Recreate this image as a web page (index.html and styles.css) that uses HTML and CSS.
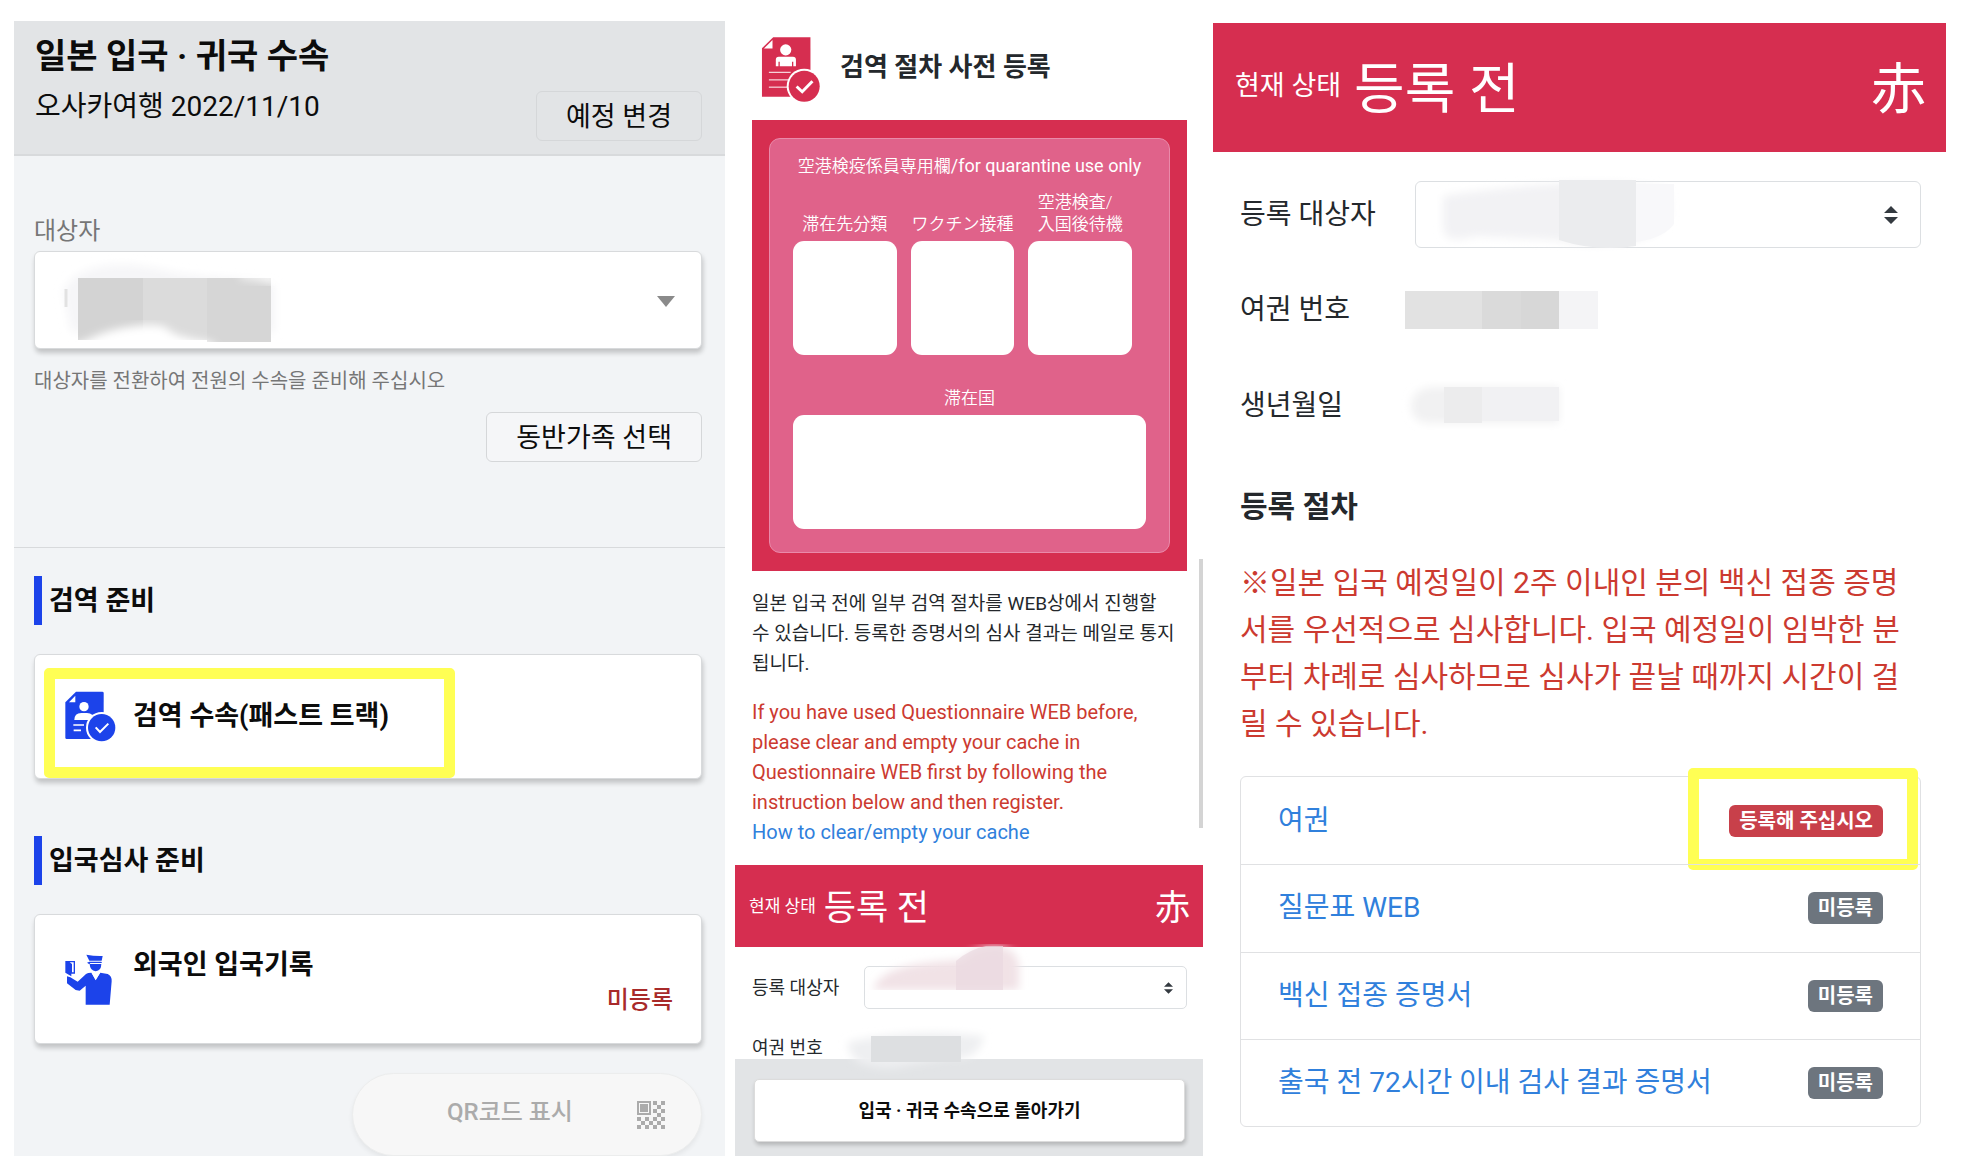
FILE: index.html
```html
<!DOCTYPE html>
<html lang="ko">
<head>
<meta charset="utf-8">
<meta name="viewport" content="width=device-width, initial-scale=1">
<title>일본 입국 · 귀국 수속</title>
<link rel="stylesheet" href="styles.css">
</head>
<body>
<main class="page">

  <section class="trip">
    <header class="trip-header">
      <h1 class="trip-title">일본 입국 · 귀국 수속</h1>
      <div class="trip-row">
        <p class="trip-name">오사카여행 2022/11/10</p>
        <button class="outline-button" type="button">예정 변경</button>
      </div>
    </header>

    <div class="person">
      <label class="person-label" for="person">대상자</label>
      <div class="person-field">
        <select class="person-select" id="person"><option></option></select>
        <svg class="person-mask" viewBox="0 0 280 96" aria-hidden="true">
          <defs>
            <filter id="soft" x="-20%" y="-20%" width="140%" height="140%"><feGaussianBlur stdDeviation="4"/></filter>
          </defs>
          <path d="M28 40C40 10 90 8 130 18S230 24 240 34V80H36Z" fill="#f6f6f8" filter="url(#soft)"/>
          <path d="M31 37v18" stroke="#e2e2e2" stroke-width="3"/>
          <path d="M43 26h65v62H43z" fill="#d3d3d3"/>
          <path d="M108 26h64v62h-64z" fill="#dbdbdb"/>
          <path d="M172 26h64v64h-64z" fill="#d6d6d6"/>
          <path d="M30 96L52 88Q72 77 100 74T134 78T176 90L184 98H30Z" fill="#fff" filter="url(#soft)"/>
          <path d="M205 22h36v10q-12-4-36-6z" fill="#fff" filter="url(#soft)"/>
        </svg>
        <svg class="person-caret" viewBox="0 0 18 11" aria-hidden="true"><path d="M0 0h18L9 11z" fill="#8a8a8a"/></svg>
      </div>
      <p class="person-help">대상자를 전환하여 전원의 수속을 준비해 주십시오</p>
      <button class="outline-button person-family" type="button">동반가족 선택</button>
    </div>

    <div class="steps">
      <h2 class="step-title">검역 준비</h2>
      <a class="step-card step-card-single" href="#quarantine">
        <svg class="step-icon" viewBox="45 37 153 151" aria-hidden="true">
          <path d="M78 38h79q4 0 4 4v138H50q-4 0-4-4V70z" fill="#1c43ea"/>
          <path d="M76 50v20H57z" fill="#fff"/>
          <circle cx="102" cy="83" r="14" fill="#fff"/>
          <path d="M73 123q0-21 21-21h17q20 0 21 21z" fill="#fff"/>
          <path d="M70 138h32M71 154h22" stroke="#fff" stroke-width="5"/>
          <circle cx="155" cy="146" r="47" fill="#fff"/>
          <circle cx="155" cy="146" r="41" fill="#1c43ea"/>
          <path d="M137 145l13 14 25-25" fill="none" stroke="#fff" stroke-width="6"/>
        </svg>
        <span class="step-name">검역 수속(패스트 트랙)</span>
        <span class="highlight highlight-step"></span>
      </a>

      <h2 class="step-title">입국심사 준비</h2>
      <a class="step-card" href="#immigration">
        <svg class="step-icon step-icon-officer" viewBox="41 40 141 153" aria-hidden="true">
          <g fill="#1c43ea">
            <path d="M105 42q25 5 49 4l-3 14h-37z"/>
            <path d="M107 66l7-3h36l2 4h-35l-3 4z"/>
            <path d="M115 70h35q0 20-17 22-17-2-18-22z"/>
            <path d="M42 61h29v38H60v8l-18-11z"/>
            <path d="M47 107l10 3 22 13 25-23q5-4 16-4l13 22 14-22 22 4q13 6 12 22l-6 70h-72v-57l-18 15-12-2-26-20z"/>
          </g>
          <path d="M55 65h12v30h-5V70z" fill="#fff"/>
          <path d="M121 96q12 6 25 0l-13 23z" fill="#fff"/>
        </svg>
        <span class="step-name">외국인 입국기록</span>
        <span class="step-status">미등록</span>
      </a>

      <button class="qr-button" type="button" disabled>
        <span>QR코드 표시</span>
        <svg class="qr-icon" viewBox="0 0 28 28" aria-hidden="true" fill="#ababab">
          <path d="M0 0h14v14H0zM2 2v10h10V2z" fill-rule="evenodd"/>
          <path d="M3 3h8v8H3z"/>
          <path d="M16 0h4v4h-4zM24 0h4v4h-4zM20 4h4v4h-4zM16 8h4v4h-4zM24 8h4v4h-4zM20 12h4v4h-4zM0 16h4v4H0zM8 16h4v4H8zM16 16h4v4h-4zM24 16h4v4h-4zM4 20h4v4H4zM12 20h4v4h-4zM20 20h4v4h-4zM0 24h4v4H0zM8 24h4v4H8zM16 24h4v4h-4zM24 24h4v4h-4z"/>
        </svg>
      </button>
    </div>
  </section>

  <section class="guide">
    <header class="guide-header">
      <svg class="guide-icon" viewBox="34 36 177 197" aria-hidden="true">
        <path d="M70 37h113v180H36V70z" fill="#d62e50"/>
        <path d="M68 45v26H42z" fill="#fff"/>
        <circle cx="108" cy="75" r="17" fill="#fff"/>
        <path d="M78 125v-20q0-9 9-9h43q9 0 9 9v20h-8v-14h-4v14H90v-14h-4v14z" fill="#fff"/>
        <path d="M57 143h66M57 166h58M57 188h58" stroke="#fff" stroke-width="3"/>
        <circle cx="164" cy="185" r="53" fill="#fff"/>
        <circle cx="164" cy="185" r="47" fill="#d62e50"/>
        <path d="M141 186l17 16 31-32" fill="none" stroke="#fff" stroke-width="9"/>
      </svg>
      <h2 class="guide-title">검역 절차 사전 등록</h2>
    </header>

    <div class="guide-body">
      <div class="official" lang="ja">
        <div class="official-inner">
          <p class="official-title">空港検疫係員専用欄<span class="official-latin">/for quarantine use only</span></p>
          <div class="official-grid">
            <p class="official-label">滞在先分類</p>
            <p class="official-label">ワクチン接種</p>
            <p class="official-label"><span>空港検査/<br>入国後待機</span></p>
            <div class="official-box"></div>
            <div class="official-box"></div>
            <div class="official-box"></div>
          </div>
          <p class="official-country">滞在国</p>
          <div class="official-box"></div>
        </div>
      </div>
      <p class="guide-text">일본 입국 전에 일부 검역 절차를 WEB상에서 진행할<br>수 있습니다. 등록한 증명서의 심사 결과는 메일로 통지<br>됩니다.</p>
      <p class="guide-text guide-warning">If you have used Questionnaire WEB before, please clear and empty your cache in Questionnaire WEB first by following the instruction below and then register.</p>
      <a class="guide-text guide-link" href="#cache">How to clear/empty your cache</a>
    </div>

    <div class="status-bar">
      <span class="status-caption">현재 상태</span>
      <strong class="status-value">등록 전</strong>
      <span class="status-color" lang="ja">赤</span>
    </div>

    <div class="mini-form">
      <label class="mini-label" for="mini-person">등록 대상자</label>
      <div class="field">
        <select class="field-select" id="mini-person"><option></option></select>
        <svg class="mini-mask" viewBox="0 0 180 60" aria-hidden="true">
          <path d="M14 46C20 26 50 18 104 16Q112 4 134 2Q156 2 160 20V46Z" fill="#f1e2e6" filter="url(#soft)"/>
          <path d="M97 17q14-12 30-15h17v44H97z" fill="#ead9df" opacity=".7"/>
          <path d="M10 46h160v10H10z" fill="#fff"/>
        </svg>
        <svg class="field-arrows" viewBox="0 0 14 18" aria-hidden="true"><path d="M7 0l7 7H0zM0 11h14l-7 7z" fill="#343a40"/></svg>
      </div>
      <span class="mini-label">여권 번호</span>
      <div class="mini-number">
        <svg class="mini-number-mask" viewBox="0 0 170 50" aria-hidden="true">
          <path d="M14 16Q80 2 150 10Q144 36 116 32L60 42Q14 44 14 16Z" fill="#eeeff1" filter="url(#soft)"/>
          <path d="M37 10h90v26H37z" fill="#dddfe1"/>
        </svg>
      </div>
    </div>

    <footer class="guide-footer">
      <button class="back-button" type="button">입국 · 귀국 수속으로 돌아가기</button>
    </footer>
    <span class="scroll-thumb"></span>
  </section>

  <section class="register">
    <div class="status-bar status-bar-large">
      <span class="status-caption">현재 상태</span>
      <strong class="status-value">등록 전</strong>
      <span class="status-color" lang="ja">赤</span>
    </div>

    <div class="register-body">
      <div class="register-row">
        <label class="register-label" for="registrant">등록 대상자</label>
        <div class="field field-large">
          <select class="field-select" id="registrant"><option></option></select>
          <svg class="register-mask" viewBox="0 0 300 76" aria-hidden="true">
            <path d="M28 20Q80 12 140 8T250 12Q264 40 240 58Q190 76 140 64L60 60Q28 70 28 50Z" fill="#f2f2f4" filter="url(#soft)"/>
            <path d="M144 4h77v66q-40 6-77-6z" fill="#ebecee"/>
            <path d="M221 8h38v40q-10 14-38 18z" fill="#f8f8fa"/>
          </svg>
          <svg class="field-arrows" viewBox="0 0 14 18" aria-hidden="true"><path d="M7 0l7 7H0zM0 11h14l-7 7z" fill="#343a40"/></svg>
        </div>
      </div>
      <div class="register-row register-row-value">
        <span class="register-label">여권 번호</span>
        <span class="value-mask"></span>
      </div>
      <div class="register-row register-row-value register-row-birth">
        <span class="register-label">생년월일</span>
        <svg class="birth-mask" viewBox="0 0 200 38" aria-hidden="true">
          <path d="M6 18Q8 1 28 0H154V36H26Q6 36 6 18Z" fill="#f1f1f2" filter="url(#soft)"/>
          <path d="M39 0h38v36H39z" fill="#ececed"/>
          <path d="M77 0h77v34H77z" fill="#f1f1f3"/>
        </svg>
      </div>

      <h2 class="register-title">등록 절차</h2>
      <p class="register-note">※일본 입국 예정일이 2주 이내인 분의 백신 접종 증명서를 우선적으로 심사합니다. 입국 예정일이 임박한 분부터 차례로 심사하므로 심사가 끝날 때까지 시간이 걸릴 수 있습니다.</p>

      <ul class="docs">
        <li class="docs-item">
          <a class="docs-link" href="#passport">여권</a>
          <span class="badge badge-required">등록해 주십시오</span>
          <span class="highlight highlight-badge"></span>
        </li>
        <li class="docs-item"><a class="docs-link" href="#questionnaire">질문표 WEB</a><span class="badge">미등록</span></li>
        <li class="docs-item"><a class="docs-link" href="#vaccine">백신 접종 증명서</a><span class="badge">미등록</span></li>
        <li class="docs-item"><a class="docs-link" href="#test">출국 전 72시간 이내 검사 결과 증명서</a><span class="badge">미등록</span></li>
      </ul>
    </div>
  </section>

</main>
</body>
</html>
```
FILE: styles.css
```css
* { box-sizing: border-box; }

body {
  margin: 0;
  background: #fff;
  color: #24282c;
  font-family: Roboto, "Noto Sans CJK KR", sans-serif;
}

h1, h2, p, ul { margin: 0; padding: 0; }
a { text-decoration: none; }
button, select { font-family: inherit; color: inherit; }
svg { display: block; }
[lang="ja"] { font-family: Roboto, "Noto Sans CJK JP", sans-serif; }

.page {
  display: grid;
  grid-template-columns: 711fr 468fr 733fr;
  gap: 10px;
  min-height: 100vh;
  padding: 21px 18px 0 14px;
}

.highlight {
  position: absolute;
  border: 11px solid #ffff54;
  border-radius: 5px;
  pointer-events: none;
}

/* Trip overview */
.trip { background: #f2f4f6; color: #0c0c0c; }
.trip-header {
  padding: 11px 23px 13px 21px;
  background: #e2e4e6;
  border-bottom: 2px solid #d8dadc;
}
.trip-title { font-size: 34px; line-height: 48px; font-weight: 700; }
.trip-row {
  display: flex;
  justify-content: space-between;
  align-items: flex-start;
  margin-top: 11px;
}
.trip-name { font-size: 28px; line-height: 32px; }
.outline-button {
  display: block;
  height: 50px;
  padding: 0 29px;
  background: transparent;
  border: 1px solid #d5d7d9;
  border-radius: 6px;
  font-size: 27px;
  line-height: 50px;
}

.person {
  padding: 59px 23px 85px 20px;
  border-bottom: 1px solid #d8dadc;
}
.person-label { display: block; font-size: 24px; line-height: 32px; color: #767676; }
.person-field { position: relative; margin-top: 4px; }
.person-select {
  display: block;
  appearance: none;
  width: 100%;
  height: 98px;
  background: #fff;
  border: 1px solid #d8dadc;
  border-radius: 6px;
  box-shadow: 1px 4px 5px rgba(0, 0, 0, .2);
}
.person-mask { position: absolute; left: 1px; top: 1px; width: 280px; height: 96px; }
.person-caret { position: absolute; right: 27px; top: 45px; width: 18px; height: 11px; }
.person-help { margin-top: 17px; font-size: 20px; line-height: 30px; color: #767676; }
.person-family { margin: 16px 0 0 auto; background: #f5f6f8; }

.steps { padding: 28px 23px 0 20px; }
.step-title {
  padding: 1px 0 0 7px;
  border-left: 8px solid #1c43ea;
  font-size: 27px;
  line-height: 48px;
  font-weight: 700;
}
.step-card {
  position: relative;
  display: grid;
  grid-template-columns: 68px 1fr;
  align-content: start;
  margin: 29px 0 57px;
  padding: 25px 28px 33px 30px;
  background: #fff;
  border: 1px solid #d8dadc;
  border-radius: 6px;
  box-shadow: 1px 4px 5px rgba(0, 0, 0, .2);
  color: inherit;
}
.step-card-single { padding: 36px 29px 36px 30px; }
.step-icon { width: 51px; height: 51px; }
.step-icon-officer { width: 47px; margin-top: 14px; grid-row: span 2; }
.step-name { font-size: 27px; line-height: 50px; font-weight: 700; }
.step-status {
  font-size: 24px;
  line-height: 20px;
  font-weight: 500;
  color: #a82a2a;
  text-align: right;
}
.highlight-step { left: 9px; top: 13px; width: 411px; height: 110px; }

.qr-button {
  display: flex;
  align-items: center;
  justify-content: space-between;
  width: 350px;
  height: 83px;
  margin: -28px 0 0 auto;
  padding: 0 36px 10px 94px;
  background: #f7f7f7;
  border: 1px solid #eceded;
  border-radius: 42px;
  box-shadow: 0 3px 5px rgba(0, 0, 0, .06);
  font-size: 24px;
  font-weight: 500;
  color: #ababab;
}
.qr-icon { width: 28px; height: 28px; margin-top: 10px; }

/* Quarantine guide */
.guide { position: relative; display: flex; flex-direction: column; }
.guide-header { display: flex; gap: 20px; padding: 16px 26px 18px; }
.guide-icon { width: 59px; height: 65px; }
.guide-title { font-size: 26px; line-height: 60px; font-weight: 700; }
.guide-body { padding: 0 16px 0 17px; }

.official { padding: 18px 17px; background: #d62e50; }
.official-inner {
  padding: 15px 23px 23px;
  background: #e0628a;
  border: 1px solid #ea8aaa;
  border-radius: 11px;
  color: #fff;
  font-size: 17px;
  line-height: 22px;
  font-weight: 350;
}
.official-title { text-align: center; line-height: 24px; white-space: nowrap; }
.official-latin { font-size: 18px; font-weight: 400; }
.official-grid {
  display: grid;
  grid-template-columns: repeat(3, 1fr);
  gap: 6px 14px;
  margin: 13px 14px 32px 0;
}
.official-label {
  display: flex;
  align-items: flex-end;
  justify-content: center;
  white-space: nowrap;
}
.official-box { height: 114px; background: #fff; border-radius: 11px; }
.official-country { margin-bottom: 6px; text-align: center; }

.guide-text { margin-top: 18px; font-size: 19px; line-height: 30px; }
.guide-warning { font-size: 20px; color: #cc3a30; }
.guide-link { display: block; margin-top: 0; font-size: 20px; color: #3080dc; }

.status-bar {
  display: flex;
  align-items: center;
  gap: 8px;
  height: 82px;
  margin-top: 18px;
  padding: 0 13px 4px 14px;
  background: #d62e50;
  color: #fff;
  font-size: 35px;
}
.status-caption { font-size: 17px; }
.status-value { font-weight: 400; }
.status-color { margin-left: auto; }

.mini-form {
  display: grid;
  grid-template-columns: 112px 1fr;
  align-items: center;
  row-gap: 28px;
  padding: 19px 16px 0 17px;
}
.mini-label { font-size: 18px; line-height: 22px; }
.mini-number { position: relative; height: 22px; }
.mini-mask { position: absolute; left: -5px; top: -22px; width: 180px; height: 60px; }
.mini-number-mask { position: absolute; left: -30px; top: -11px; width: 170px; height: 50px; z-index: 1; }

.field { position: relative; }
.field-select {
  display: block;
  appearance: none;
  width: 100%;
  height: 43px;
  background: #fff;
  border: 1px solid #dcdfe2;
  border-radius: 5px;
}
.field-arrows { position: absolute; right: 14px; top: 16px; width: 9px; height: 12px; }

.guide-footer { flex: 1; padding: 20px 18px 13px 19px; background: #e2e4e6; }
.back-button {
  display: block;
  width: 100%;
  height: 63px;
  padding-bottom: 4px;
  background: #fff;
  border: 1px solid #dcdcdc;
  border-radius: 5px;
  box-shadow: 1px 3px 4px rgba(0, 0, 0, .2);
  font-size: 18px;
  font-weight: 700;
  color: #0c0c0c;
}
.scroll-thumb { position: absolute; right: 0; top: 538px; width: 4px; height: 269px; background: #d4d4d4; }

/* Registration */
.register { padding-top: 2px; }
.status-bar-large {
  gap: 13px;
  height: 129px;
  margin-top: 0;
  padding: 0 20px 8px 22px;
  font-size: 55px;
}
.status-bar-large .status-caption { font-size: 27px; }

.register-body { padding: 29px 25px 0 27px; }
.register-row { display: flex; align-items: center; }
.register-row-value { height: 38px; margin-top: 43px; }
.register-row-birth { margin-top: 58px; }
.register-label { flex: 0 0 175px; font-size: 28px; line-height: 38px; }
.field-large { flex: 1; }
.field-large .field-select { height: 67px; border-radius: 6px; }
.field-large .field-arrows { right: 23px; top: 25px; width: 14px; height: 18px; }
.register-mask { position: absolute; left: 0; top: -5px; width: 300px; height: 76px; }
.value-mask {
  width: 193px;
  height: 38px;
  margin-left: -10px;
  background: linear-gradient(90deg, #e2e2e2 0 40%, #dadada 40% 60%, #d7d7d7 60% 80%, #f4f4f6 80%);
}
.birth-mask { width: 200px; height: 38px; margin-left: -10px; overflow: visible; }

.register-title { margin-top: 62px; font-size: 30px; line-height: 40px; font-weight: 700; }
.register-note {
  margin-top: 32px;
  padding-right: 10px;
  font-size: 30px;
  line-height: 47px;
  color: #cc3a30;
}

.docs {
  display: grid;
  grid-auto-rows: 1fr;
  min-height: 351px;
  margin-top: 29px;
  border: 1px solid #e0e1e3;
  border-radius: 6px;
  list-style: none;
}
.docs-item {
  position: relative;
  display: flex;
  align-items: center;
  justify-content: space-between;
  padding: 20px 37px;
}
.docs-item + .docs-item { border-top: 1px solid #e0e1e3; }
.docs-link { font-size: 28px; line-height: 40px; color: #3080dc; }
.badge {
  padding: 0 10px;
  background: #6d757e;
  border-radius: 6px;
  color: #fff;
  font-size: 20px;
  line-height: 32px;
  font-weight: 700;
}
.badge-required { background: #c8404a; }
.highlight-badge { right: 2px; top: -9px; width: 230px; height: 102px; }
```
